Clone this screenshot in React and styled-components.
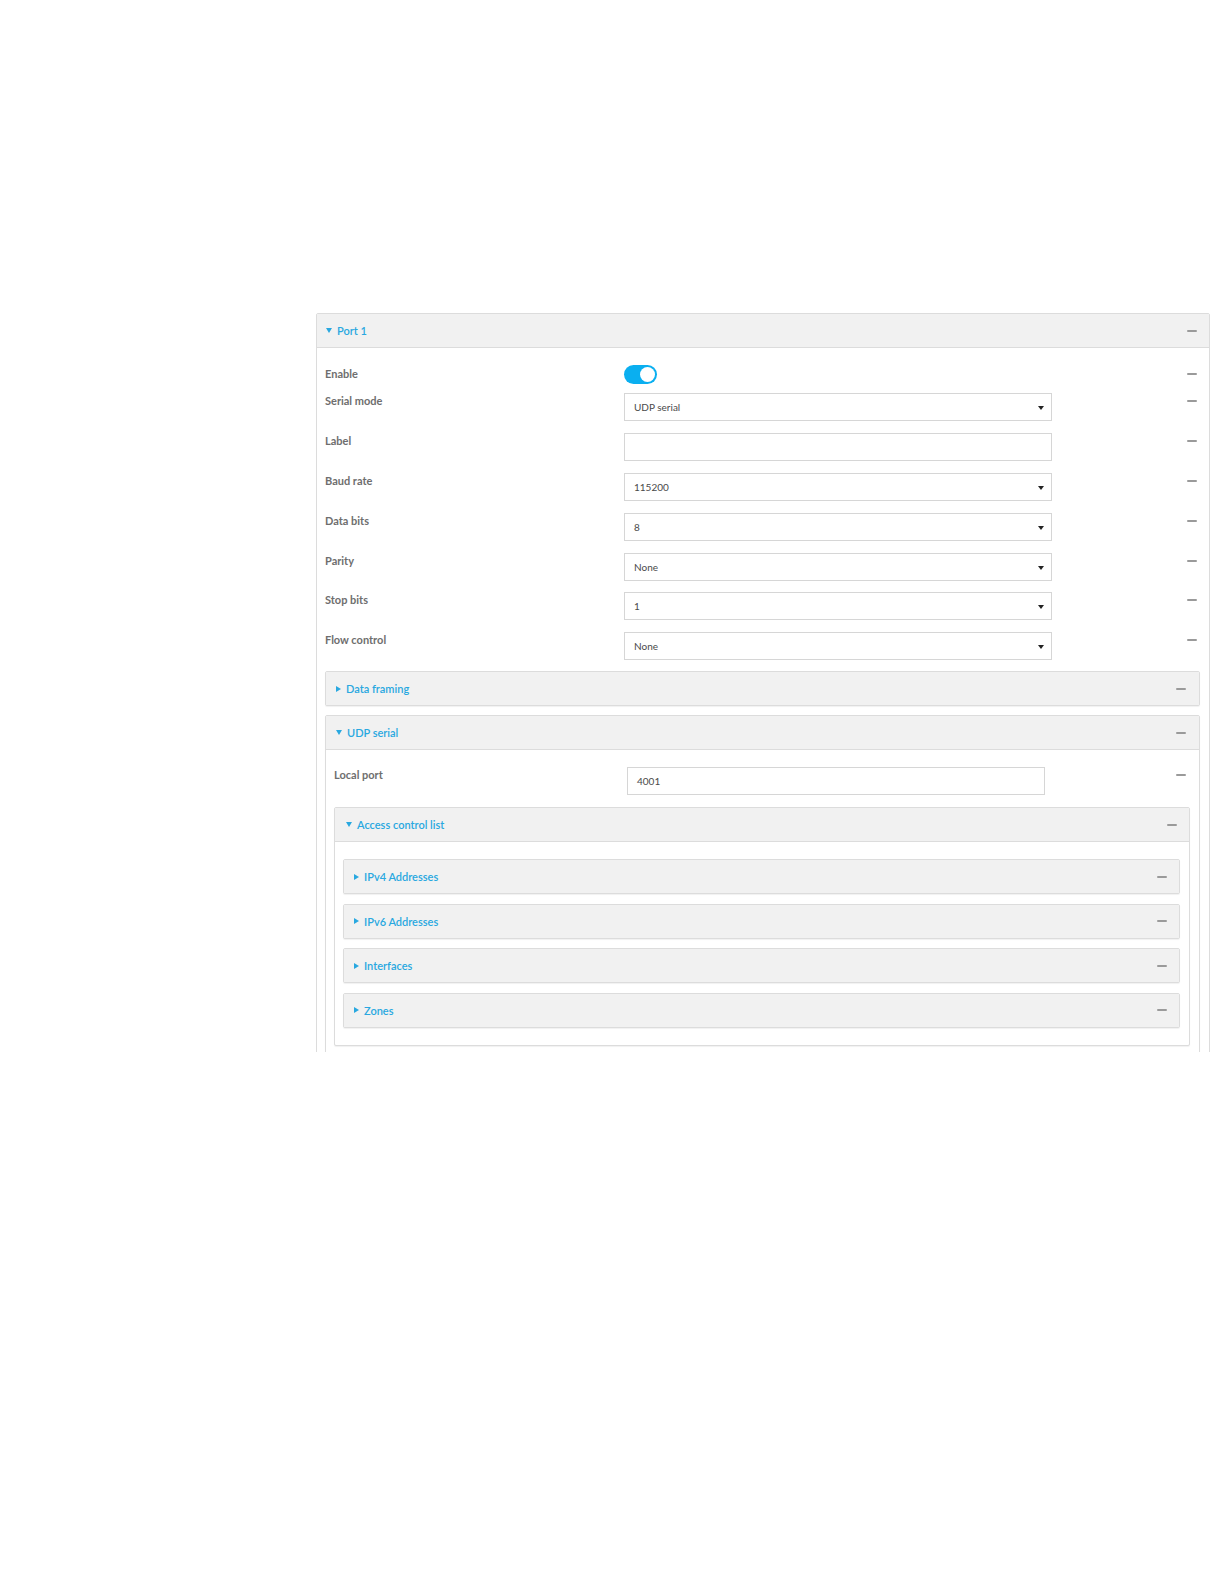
import React from 'react';
import styled, { createGlobalStyle } from 'styled-components';

const GlobalStyle = createGlobalStyle`
	html, body {
		margin: 0;
		background: #fff;
		font-family: 'Lato', 'Open Sans', sans-serif;
	}
`;

const Page = styled.div`
	padding: 313px 14px 0 316px;
`;

// the screenshot is cut off part way down the panel
const Viewport = styled.div`
	height: 739px;
	overflow: hidden;
`;

const Panel = styled.div`
	border: 1px solid #dcdcdc;
	border-radius: 2px;
	background: #fff;
	box-shadow: 0 1px 1px rgba(0, 0, 0, 0.06);
	margin-bottom: ${(p) => p.gap || 0}px;
`;

const PanelHeader = styled.div`
	display: flex;
	align-items: center;
	justify-content: space-between;
	height: ${(p) => (p.open ? 34 : 33)}px;
	padding: 0 ${(p) => p.padRight || 12}px 0 ${(p) => p.padLeft || 9}px;
	background: #f1f1f1;
	border-bottom: ${(p) => (p.open ? '1px solid #dcdcdc' : 'none')};
	box-sizing: border-box;
`;

const Title = styled.span`
	display: flex;
	align-items: center;
	gap: 5px;
	font-size: 11px;
	font-weight: 600;
	color: #29a8e0;
`;

const Caret = styled.span`
	width: 0;
	height: 0;
	border-style: solid;
	${(p) =>
		p.open
			? 'border-width: 5px 3px 0 3px; border-color: #29a8e0 transparent transparent transparent;'
			: 'border-width: 3px 0 3px 5px; border-color: transparent transparent transparent #29a8e0;'}
`;

const Minus = styled.span`
	display: block;
	width: 10px;
	height: 2px;
	background: #9a9a9a;
	border-radius: 1px;
`;

const Body = styled.div`
	padding: ${(p) => p.pad};
`;

const Row = styled.div`
	display: grid;
	grid-template-columns: ${(p) => p.labelWidth}px ${(p) => p.fieldWidth}px 1fr 10px;
	align-items: start;
	margin-bottom: ${(p) => p.gap}px;
	padding-right: ${(p) => p.padRight || 0}px;
`;

const Label = styled.div`
	font-size: 11px;
	font-weight: 700;
	color: #6e6e6e;
	line-height: 16px;
	padding-top: ${(p) => p.top || 0}px;
`;

const MinusCell = styled.div`
	grid-column: 4;
	padding-top: ${(p) => p.top || 7}px;
`;

const Field = styled.div`
	position: relative;
	height: 28px;
	border: 1px solid #d6d6d6;
	box-sizing: border-box;
	background: #fff;
	display: flex;
	align-items: center;
	padding-left: 9px;
	font-size: 10px;
	color: #4a4a4a;
`;

const Arrow = styled.span`
	position: absolute;
	right: 7px;
	top: 12px;
	width: 0;
	height: 0;
	border-style: solid;
	border-width: 4px 3px 0 3px;
	border-color: #222 transparent transparent transparent;
`;

const Toggle = styled.div`
	position: relative;
	width: 33px;
	height: 19px;
	border-radius: 10px;
	background: #0aaff0;

	&::after {
		content: '';
		position: absolute;
		right: 2px;
		top: 2px;
		width: 15px;
		height: 15px;
		border-radius: 50%;
		background: #fff;
	}
`;

const portFields = [
	{ label: 'Serial mode', value: 'UDP serial', select: true },
	{ label: 'Label', value: '' },
	{ label: 'Baud rate', value: '115200', select: true },
	{ label: 'Data bits', value: '8', select: true },
	{ label: 'Parity', value: 'None', select: true },
	{ label: 'Stop bits', value: '1', select: true },
	{ label: 'Flow control', value: 'None', select: true }
];

const aclGroups = ['IPv4 Addresses', 'IPv6 Addresses', 'Interfaces', 'Zones'];

function Header({ title, open, padLeft, padRight }) {
	return (
		<PanelHeader open={open} padLeft={padLeft} padRight={padRight}>
			<Title>
				<Caret open={open} />
				{title}
			</Title>
			<Minus />
		</PanelHeader>
	);
}

export default function App() {
	return (
		<>
			<GlobalStyle />
			<Page>
				<Viewport>
					<Panel>
						<Header title='Port 1' open padLeft={9} padRight={12} />
						<Body pad='17px 9px 40px 8px'>
							{/* ENABLE */}
							<Row labelWidth={299} fieldWidth={33} gap={9} padRight={3}>
								<Label top={1}>Enable</Label>
								<div>
									<Toggle />
								</div>
								<MinusCell top={8}>
									<Minus />
								</MinusCell>
							</Row>

							{/* PORT SETTINGS */}
							{portFields.map((f, i) => (
								<Row
									key={f.label}
									labelWidth={299}
									fieldWidth={428}
									padRight={3}
									gap={i === portFields.length - 1 ? 11 : 11.9}
								>
									<Label>{f.label}</Label>
									<Field>
										{f.value}
										{f.select && <Arrow />}
									</Field>
									<MinusCell>
										<Minus />
									</MinusCell>
								</Row>
							))}

							<Panel gap={9}>
								<Header title='Data framing' padLeft={10} padRight={13} />
							</Panel>

							<Panel>
								<Header title='UDP serial' open padLeft={10} padRight={13} />
								<Body pad='17px 9px 40px 8px'>
									<Row labelWidth={293} fieldWidth={418} gap={12} padRight={4}>
										<Label>Local port</Label>
										<Field>4001</Field>
										<MinusCell>
											<Minus />
										</MinusCell>
									</Row>

									<Panel>
										<Header title='Access control list' open padLeft={11} padRight={12} />
										<Body pad='17px 9px 17px 8px'>
											{aclGroups.map((g, i) => (
												<Panel key={g} gap={i === aclGroups.length - 1 ? 0 : 9.5}>
													<Header title={g} padLeft={10} padRight={12} />
												</Panel>
											))}
										</Body>
									</Panel>
								</Body>
							</Panel>
						</Body>
					</Panel>
				</Viewport>
			</Page>
		</>
	);
}
